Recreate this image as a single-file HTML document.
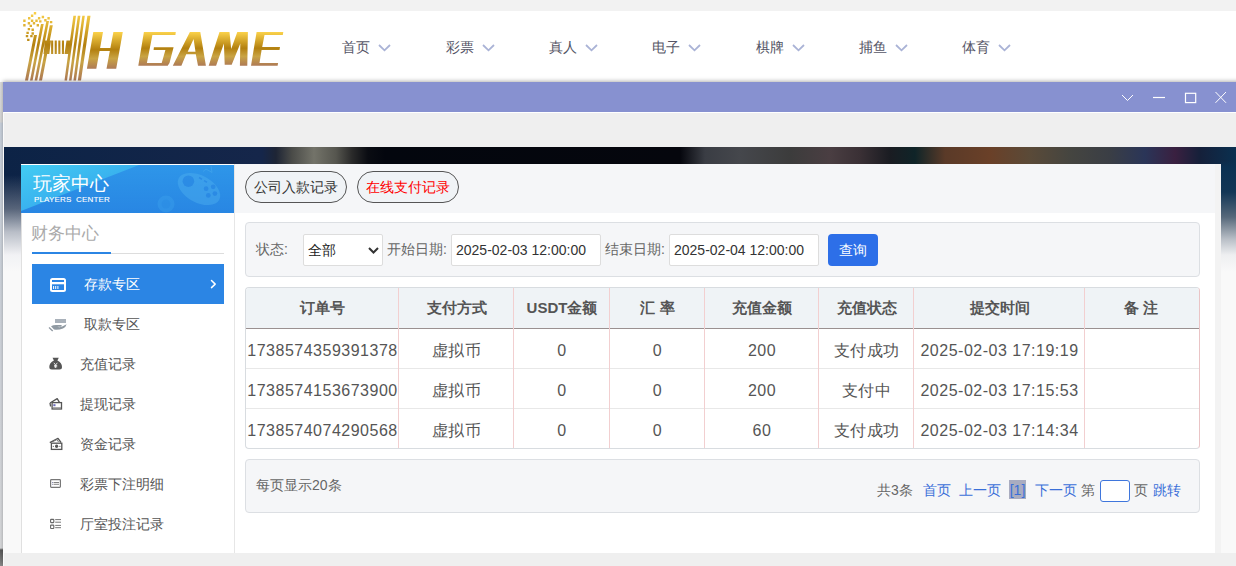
<!DOCTYPE html>
<html><head><meta charset="utf-8">
<style>
*{box-sizing:border-box;margin:0;padding:0}
html,body{width:1236px;height:566px;overflow:hidden;background:#f2f2f2;font-family:"Liberation Sans",sans-serif;}
.abs{position:absolute}
#hdr{position:absolute;left:0;top:11px;width:1236px;height:71px;background:#fff}
.nav{position:absolute;top:27px;font-size:14px;color:#555566;line-height:18px;white-space:nowrap}
.nav svg{position:absolute;left:36px;top:6px}
#under{position:absolute;left:0;top:82px;width:3px;height:484px;background:linear-gradient(to bottom,#dcdcdc 0,#d8d8d8 40px,#c9d1dc 41px,#d3d7dd 300px,#d9dadc 466px,#5a5a5a 468px,#8a8a8a 484px)}
#modal{position:absolute;left:3px;top:82px;width:1240px;height:484px;background:#efefef;box-shadow:0 -1px 4px rgba(0,0,0,.3)}
#title{position:absolute;left:0;top:0;width:100%;height:30px;background:#8791d0}
#frame{position:absolute;left:1px;top:65px;width:1239px;height:406px;overflow:hidden;background:linear-gradient(to bottom,rgba(255,255,255,0) 0px,rgba(255,255,255,0) 28px,rgba(150,155,165,.55) 62px,rgba(215,217,222,.85) 85px,rgba(246,246,248,.98) 108px,#f9f9f9 125px),linear-gradient(to right,#0c2346 -4px,#15264a 258px,#1e2535 272px,#4a4b48 288px,#737369 310px,#56564f 332px,#2a2a2a 348px,#0a0c12 364px,#03060e 381px,#05060d 676px,#3a3d44 701px,#45474c 736px,#3c3c3c 786px,#4a3e42 826px,#3a3035 856px,#1a1c22 886px,#0f2428 911px,#5a3a28 941px,#6a4028 986px,#5a4a38 1026px,#454540 1066px,#3a3e45 1106px,#2a3558 1141px,#3a2040 1171px,#15203a 1196px,#0a3050 1232px)}
#panel{position:absolute;left:17px;top:17px;width:1200px;height:389px;background:#f3f3f3}
#side{position:absolute;left:0;top:0;width:214px;height:389px;background:#fff;border-right:1px solid #e6e6e6}
#shead{position:absolute;left:0;top:1px;width:213px;height:48px;background:linear-gradient(110deg,#3fc2ef 0%,#2f9de9 35%,#2b8ee6 60%,#2784e2 100%)}
.item{position:absolute;left:11px;width:192px;height:40px;font-size:14px;color:#555;line-height:40px}
.item.act{background:#2b85e4;color:#fff}
.item svg{position:absolute;overflow:visible}
#main{position:absolute;left:214px;top:0;width:980px;height:389px;background:#fff}
#tabs{position:absolute;left:0;top:0;width:980px;height:49px;background:#f5f6f8}
.pill{position:absolute;top:7px;height:32px;border:1px solid #555;border-radius:16px;background:#f0f3f6;font-size:14px;line-height:30px;text-align:center;color:#333}
.box{position:absolute;border:1px solid #dcdfe3;border-radius:4px;background:#f5f6f8}
.lbl{position:absolute;font-size:14px;color:#666;line-height:18px;white-space:nowrap}
.inp{position:absolute;top:11px;height:32px;background:#fff;border:1px solid #ddd;border-radius:2px;font-size:14px;color:#333;line-height:30px;padding-left:4px;white-space:nowrap}
.th{position:absolute;top:0;height:40px;line-height:40px;text-align:center;font-size:15px;font-weight:bold;color:#555}
.td{position:absolute;height:40px;line-height:44px;text-align:center;font-size:16px;color:#555;white-space:nowrap;letter-spacing:0.5px}
</style></head><body>
<div id="hdr">

  <div class="nav" style="left:342.4px">首页<svg width="13" height="8"><path d="M1 1L6.5 6.3L12 1" fill="none" stroke="#aab3d6" stroke-width="1.8"/></svg></div>
  <div class="nav" style="left:445.7px">彩票<svg width="13" height="8"><path d="M1 1L6.5 6.3L12 1" fill="none" stroke="#aab3d6" stroke-width="1.8"/></svg></div>
  <div class="nav" style="left:549.0px">真人<svg width="13" height="8"><path d="M1 1L6.5 6.3L12 1" fill="none" stroke="#aab3d6" stroke-width="1.8"/></svg></div>
  <div class="nav" style="left:652.3px">电子<svg width="13" height="8"><path d="M1 1L6.5 6.3L12 1" fill="none" stroke="#aab3d6" stroke-width="1.8"/></svg></div>
  <div class="nav" style="left:755.6px">棋牌<svg width="13" height="8"><path d="M1 1L6.5 6.3L12 1" fill="none" stroke="#aab3d6" stroke-width="1.8"/></svg></div>
  <div class="nav" style="left:858.9px">捕鱼<svg width="13" height="8"><path d="M1 1L6.5 6.3L12 1" fill="none" stroke="#aab3d6" stroke-width="1.8"/></svg></div>
  <div class="nav" style="left:962.2px">体育<svg width="13" height="8"><path d="M1 1L6.5 6.3L12 1" fill="none" stroke="#aab3d6" stroke-width="1.8"/></svg></div>
</div>
<div id="under"></div>
<svg class="abs" style="left:0;top:0" width="300" height="84" viewBox="0 0 300 84">
  <defs>
    <linearGradient id="gold" x1="0" y1="0" x2="0" y2="1">
      <stop offset="0" stop-color="#fbd24a"/>
      <stop offset="0.48" stop-color="#b3800f"/>
      <stop offset="0.72" stop-color="#c9a443"/>
      <stop offset="1" stop-color="#ae7a56"/>
    </linearGradient>
  </defs>
  <path fill="url(#gold)" d="M86.9 68.7 L93.3 32.1 L103.0 32.1 L96.3 68.7Z M106.5 68.7 L113.4 32.1 L122.8 32.1 L116.2 68.7Z M99.5 48.1 L117.5 48.1 L117.1 51.1 L99.1 51.1Z"/>
  <path fill="url(#gold)" d="M143.9 32.0 L175.8 32.0 L175.4 35.0 L152.4 35.0 L146.9 62.9 L161.7 62.9 L165.4 49.9 L153.6 49.9 L153.9 47.3 L173.6 47.3 L169.5 63.0 L167.7 65.8 L138.3 65.8Z M189.9 32.0 L200.3 32.0 L205.9 65.8 L198.0 65.8 L195.8 54.3 L186.2 54.3 L181.4 65.8 L172.8 65.8ZM193.6 39.1 L187.7 51.7 L195.5 51.7Z M208.7 65.8 L219.5 32.0 L229.5 32.0 L231.2 49.0 L237.3 32.0 L247.9 32.0 L247.3 65.8 L239.9 65.8 L240.3 43.6 L231.7 64.7 L224.7 64.7 L223.9 43.6 L216.1 65.8Z M256.6 32.0 L283.3 32.0 L282.8 35.1 L264.5 35.1 L262.2 46.9 L280.0 46.9 L279.5 49.9 L261.6 49.9 L259.5 62.9 L278.1 62.9 L277.6 65.8 L251.0 65.8Z"/>
  <path fill="url(#gold)" d="M25.0 80.5 L34.0 35.0 L37.0 35.0 L28.0 80.5Z M30.0 80.5 L41.0 24.0 L43.7 24.0 L32.6 80.5Z M34.6 80.5 L46.4 21.0 L49.0 21.0 L37.2 80.5Z M39.0 80.5 L49.8 25.3 L52.8 25.3 L42.0 80.5Z M64.5 80.5 L73.4 15.7 L76.0 15.7 L67.0 80.5Z M69.0 80.5 L77.8 15.7 L80.4 15.7 L71.5 80.5Z M73.4 80.5 L82.3 15.7 L84.8 15.7 L76.0 80.5Z M77.8 80.5 L87.4 15.7 L90.5 15.7 L81.0 80.5Z M45.0 40.5 L51.0 40.5 L49.3 54.0 L43.5 54.0Z M51.1 40.5 L53.2 40.5 L53.2 54.0 L51.1 54.0Z M54.7 40.5 L56.8 40.5 L56.8 54.0 L54.7 54.0Z M58.3 40.5 L60.4 40.5 L60.4 54.0 L58.3 54.0Z M61.9 40.5 L64.0 40.5 L64.0 54.0 L61.9 54.0Z M66.5 40.5 L71.5 40.5 L69.5 54.0 L64.5 54.0Z M33.8 12.0 L36.2 12.0 L36.2 14.4 L33.8 14.4Z M30.9 14.5 L33.3 14.5 L33.3 16.9 L30.9 16.9Z M28.0 17.1 L30.4 17.1 L30.4 19.5 L28.0 19.5Z M37.9 17.1 L40.3 17.1 L40.3 19.5 L37.9 19.5Z M41.7 15.8 L44.1 15.8 L44.1 18.2 L41.7 18.2Z M47.4 17.1 L49.8 17.1 L49.8 19.5 L47.4 19.5Z M23.2 19.6 L25.6 19.6 L25.6 22.0 L23.2 22.0Z M30.9 19.6 L33.3 19.6 L33.3 22.0 L30.9 22.0Z M35.3 19.6 L37.7 19.6 L37.7 22.0 L35.3 22.0Z M39.1 20.2 L41.5 20.2 L41.5 22.6 L39.1 22.6Z M49.9 20.9 L52.3 20.9 L52.3 23.3 L49.9 23.3Z M27.7 22.1 L30.1 22.1 L30.1 24.5 L27.7 24.5Z M32.8 22.1 L35.2 22.1 L35.2 24.5 L32.8 24.5Z M44.2 19.0 L46.6 19.0 L46.6 21.4 L44.2 21.4Z M23.2 24.1 L25.6 24.1 L25.6 26.5 L23.2 26.5Z M29.6 24.7 L32.0 24.7 L32.0 27.1 L29.6 27.1Z M36.6 24.1 L39.0 24.1 L39.0 26.5 L36.6 26.5Z M27.7 27.9 L30.1 27.9 L30.1 30.3 L27.7 30.3Z M31.5 28.5 L33.9 28.5 L33.9 30.9 L31.5 30.9Z M26.4 31.7 L28.8 31.7 L28.8 34.1 L26.4 34.1Z M31.5 32.3 L33.9 32.3 L33.9 34.7 L31.5 34.7Z M25.8 34.9 L28.2 34.9 L28.2 37.3 L25.8 37.3Z M30.2 34.9 L32.6 34.9 L32.6 37.3 L30.2 37.3Z M27.1 38.7 L29.5 38.7 L29.5 41.1 L27.1 41.1Z"/>
</svg>
<div id="modal">
  <div id="title">
    <svg class="abs" style="left:1115px;top:9px" width="115" height="14" viewBox="0 0 115 14">
      <path d="M4 4L9.5 9.5L15 4" fill="none" stroke="#fff" stroke-width="1"/>
      <path d="M35 6.5H47" stroke="#fff" stroke-width="1.2"/>
      <rect x="67.5" y="2.3" width="10.2" height="9.3" fill="none" stroke="#fff" stroke-width="1.2"/>
      <path d="M97.5 1L108 11.8M108 1L97.5 11.8" stroke="#fff" stroke-width="1"/>
    </svg>
  </div>
  <div class="abs" style="left:0;top:30px;width:1240px;height:1px;background:#fff"></div>
  <div class="abs" style="left:0;top:30px;width:1px;height:454px;background:#fafafa"></div>
  <div id="frame">
    <div class="abs" style="left:1217px;top:0;width:22px;height:125px;background:linear-gradient(to bottom,rgba(10,48,80,0) 0,rgba(10,48,80,0) 14px,#0b3152 20px,#123656 45px,#56687a 70px,#b8bec6 92px,#eeeff1 108px,#f9f9f9 125px)"></div>
    <div id="panel">
      <div id="side">
        <div class="abs" style="left:0;top:49px;width:1px;height:340px;background:#e0e0e0"></div>
        <div id="shead">
          <svg class="abs" style="left:0;top:0" width="213" height="48" viewBox="0 0 213 48">
            <defs>
              <linearGradient id="hb" x1="0" y1="0" x2="0" y2="1"><stop offset="0" stop-color="#2e96e9"/><stop offset="1" stop-color="#2886e3"/></linearGradient>
              <linearGradient id="hl" x1="0" y1="0" x2="1" y2="1"><stop offset="0" stop-color="#42ccf3"/><stop offset="1" stop-color="#3199ea"/></linearGradient>
            </defs>
            <rect width="213" height="48" fill="url(#hb)"/>
            <path d="M0 0H118L0 46Z" fill="url(#hl)"/>
            <g opacity="0.45">
              <ellipse cx="178" cy="24" rx="23" ry="13.5" transform="rotate(28 178 24)" fill="#4eb0f0"/>
              <circle cx="167.4" cy="16.2" r="5.8" fill="#2b88e4"/>
              <circle cx="185.1" cy="23.7" r="2.4" fill="#2b88e4"/>
              <circle cx="192.2" cy="21.8" r="2.4" fill="#2b88e4"/>
              <circle cx="187.3" cy="30.4" r="2.4" fill="#2b88e4"/>
              <circle cx="193.9" cy="28.6" r="2.4" fill="#2b88e4"/>
              <path d="M178 12.5L181 14.2M183 15.6L186 17.3" stroke="#2b88e4" stroke-width="1.6"/>
              <path d="M182 6.5L185 4L191 7.5L190 1" stroke="#4eb0f0" stroke-width="1" fill="none"/>
              <circle cx="145" cy="39" r="8.5" fill="#3aa0ec"/>
              <circle cx="145" cy="39" r="4.5" fill="#3196e8"/>
            </g>
          </svg>
          <div class="abs" style="left:12px;top:8px;font-size:19px;color:#fff;line-height:22px">玩家中心</div>
          <div class="abs" style="left:13px;top:30px;font-size:8px;color:#fff;line-height:9px;letter-spacing:0.15px;-webkit-text-stroke:0.1px #fff">PLAYERS&nbsp; CENTER</div>
        </div>
        <div class="abs" style="left:10px;top:60px;font-size:17px;color:#aaa;line-height:20px">财务中心</div>
        <div class="abs" style="left:11px;top:89px;width:192px;height:1px;background:#ddd"></div>
        <div class="abs" style="left:11px;top:88px;width:79px;height:2px;background:#2b85e4"></div>
        <div class="item act" style="top:100px"><svg width="40" height="40" style="left:0;top:0" viewBox="0 0 40 40"><rect x="18" y="14" width="16" height="14" rx="2.5" fill="#fff"/><rect x="20" y="16" width="12" height="2" fill="#2b85e4"/><rect x="20" y="20.3" width="12" height="5.7" fill="#2b85e4"/><rect x="21.1" y="22" width="1" height="3" fill="#fff"/><rect x="23.2" y="22" width="1" height="3" fill="#fff"/><rect x="25.4" y="22" width="1" height="3" fill="#fff"/><path d="M179.5 16.5L183.2 20.1L179.5 23.6" fill="none" stroke="#fff" stroke-width="1.5" stroke-linecap="round" stroke-linejoin="round" transform="translate(0,0)"/></svg><span style="position:absolute;left:52px">存款专区</span></div>
        <div class="item" style="top:140px"><svg width="40" height="40" style="left:0;top:0" viewBox="0 0 40 40"><rect x="23" y="15" width="11" height="4" fill="#a9b1ba"/><path d="M19 22.3Q21 20.9 24 20.9L29.3 20.9Q30.6 21.6 29 22.7L25.2 22.7Q27.2 23.6 30.2 22.6L34.6 20.3Q34.2 22.8 31 24.4Q27 26 22 25.6Z" fill="#8f99a2"/><path d="M17.4 23L21.2 26.6L20.2 27.5L16.6 24Z" fill="#8f99a2"/></svg><span style="position:absolute;left:52px">取款专区</span></div>
        <div class="item" style="top:180px"><svg width="40" height="40" style="left:0;top:0" viewBox="0 0 40 40"><path d="M20.5 13.8L26.8 13.8L25.4 16.4Q30 18.5 30 23Q30 25.5 27.5 25.5L19.8 25.5Q17.3 25.5 17.3 23Q17.3 18.5 21.9 16.4Z" fill="#555"/><path d="M21.9 18.8L23.6 21L25.3 18.8M23.6 21V24M22 21.6H25.2M22 22.8H25.2" stroke="#fff" stroke-width="0.8" fill="none"/></svg><span style="position:absolute;left:48px">充值记录</span></div>
        <div class="item" style="top:220px"><svg width="40" height="40" style="left:0;top:0" viewBox="0 0 40 40"><path d="M18 19L25.2 14.6L27.6 18.6" stroke="#555" stroke-width="1.3" fill="none" stroke-linejoin="round"/><path d="M18 19L18.6 22.5" stroke="#555" stroke-width="1.3"/><rect x="20.1" y="18.6" width="9.4" height="6.4" stroke="#555" stroke-width="1.3" fill="none"/><rect x="21.3" y="20.2" width="2.2" height="2" fill="#6d6dbb"/><rect x="21" y="23.3" width="8" height="1.3" fill="#888"/></svg><span style="position:absolute;left:48px">提现记录</span></div>
        <div class="item" style="top:260px"><svg width="40" height="40" style="left:0;top:0" viewBox="0 0 40 40"><path d="M17.8 18.6L26 14.3L29 18.5" stroke="#555" stroke-width="1.3" fill="none" stroke-linejoin="round"/><path d="M21 17.5L25 15.5L26.5 18" stroke="#777" stroke-width="1" fill="none"/><rect x="19.4" y="19.2" width="10.4" height="6.2" stroke="#555" stroke-width="1.3" fill="none"/><ellipse cx="24.6" cy="22.3" rx="1.6" ry="1.8" fill="#555"/><circle cx="21.3" cy="22.3" r="0.6" fill="#555"/><circle cx="27.9" cy="22.3" r="0.6" fill="#555"/></svg><span style="position:absolute;left:48px">资金记录</span></div>
        <div class="item" style="top:300px"><svg width="40" height="40" style="left:0;top:0" viewBox="0 0 40 40"><rect x="18.6" y="15.6" width="9.8" height="7.7" rx="0.8" stroke="#777" stroke-width="1.2" fill="none"/><path d="M21.5 18.5H27M21.5 20.3H27" stroke="#777" stroke-width="0.9"/><path d="M20 18.5H20.8M20 20.3H20.8" stroke="#669" stroke-width="0.9"/></svg><span style="position:absolute;left:48px">彩票下注明细</span></div>
        <div class="item" style="top:340px"><svg width="40" height="40" style="left:0;top:0" viewBox="0 0 40 40"><rect x="18.6" y="15.4" width="3.2" height="3.2" rx="0.5" stroke="#666" stroke-width="1.1" fill="none"/><rect x="18.6" y="21.1" width="3.2" height="3.4" rx="0.5" stroke="#666" stroke-width="1.1" fill="none"/><path d="M23.2 15.6H29M23.2 18.2H29M23.2 21.4H29M23.2 23.7H29" stroke="#777" stroke-width="1"/></svg><span style="position:absolute;left:48px">厅室投注记录</span></div>
      </div>
      <div id="main">
        <div id="tabs">
          <div class="pill" style="left:10px;width:102px">公司入款记录</div>
          <div class="pill" style="left:122px;width:102px;color:#f00">在线支付记录</div>
        </div>
        <div class="box" style="left:10px;top:58px;width:955px;height:55px">
          <div class="lbl" style="left:10px;top:17px">状态:</div>
          <div class="inp" style="left:57px;width:80px;color:#222">全部<svg class="abs" style="left:64px;top:12px" width="11" height="7"><path d="M1 1L5.5 5.5L10 1" fill="none" stroke="#333" stroke-width="2"/></svg></div>
          <div class="lbl" style="left:141px;top:17px">开始日期:</div>
          <div class="inp" style="left:205px;width:150px">2025-02-03 12:00:00</div>
          <div class="lbl" style="left:359px;top:17px">结束日期:</div>
          <div class="inp" style="left:423px;width:150px">2025-02-04 12:00:00</div>
          <div class="abs" style="left:582px;top:11px;width:50px;height:32px;background:#2d6fe8;border-radius:4px;color:#fff;font-size:14px;line-height:32px;text-align:center">查询</div>
        </div>
        <div id="tbl" class="abs" style="left:10px;top:123px;width:955px;height:162px;border:1px solid #d8dce0;border-right-color:#eac4c6;border-radius:4px;overflow:hidden">
          <div class="abs" style="left:0;top:0;width:953px;height:41px;background:#eff3f6;border-bottom:1px solid #9a9090"></div>
          <div class="abs" style="left:0;top:80px;width:953px;height:1px;background:#e8e8e8"></div>
          <div class="abs" style="left:0;top:120px;width:953px;height:1px;background:#e8e8e8"></div>
          <div class="abs" style="left:152px;top:0;width:1px;height:162px;background:#f2cfd0"></div>
          <div class="abs" style="left:267px;top:0;width:1px;height:162px;background:#f2cfd0"></div>
          <div class="abs" style="left:363px;top:0;width:1px;height:162px;background:#f2cfd0"></div>
          <div class="abs" style="left:458px;top:0;width:1px;height:162px;background:#f2cfd0"></div>
          <div class="abs" style="left:572px;top:0;width:1px;height:162px;background:#f2cfd0"></div>
          <div class="abs" style="left:667px;top:0;width:1px;height:162px;background:#f2cfd0"></div>
          <div class="abs" style="left:838px;top:0;width:1px;height:162px;background:#f2cfd0"></div>
          <div class="th" style="left:0px;width:153px">订单号</div>
          <div class="th" style="left:153px;width:115px">支付方式</div>
          <div class="th" style="left:268px;width:96px">USDT金额</div>
          <div class="th" style="left:364px;width:95px">汇 率</div>
          <div class="th" style="left:459px;width:114px">充值金额</div>
          <div class="th" style="left:573px;width:95px">充值状态</div>
          <div class="th" style="left:668px;width:171px">提交时间</div>
          <div class="th" style="left:838px;width:114px">备 注</div>
          <div class="td" style="left:0px;top:41px;width:153px">1738574359391378</div>
          <div class="td" style="left:153px;top:41px;width:115px">虚拟币</div>
          <div class="td" style="left:268px;top:41px;width:96px">0</div>
          <div class="td" style="left:364px;top:41px;width:95px">0</div>
          <div class="td" style="left:459px;top:41px;width:114px">200</div>
          <div class="td" style="left:573px;top:41px;width:95px">支付成功</div>
          <div class="td" style="left:668px;top:41px;width:171px">2025-02-03 17:19:19</div>
          <div class="td" style="left:838px;top:41px;width:114px"></div>
          <div class="td" style="left:0px;top:81px;width:153px">1738574153673900</div>
          <div class="td" style="left:153px;top:81px;width:115px">虚拟币</div>
          <div class="td" style="left:268px;top:81px;width:96px">0</div>
          <div class="td" style="left:364px;top:81px;width:95px">0</div>
          <div class="td" style="left:459px;top:81px;width:114px">200</div>
          <div class="td" style="left:573px;top:81px;width:95px">支付中</div>
          <div class="td" style="left:668px;top:81px;width:171px">2025-02-03 17:15:53</div>
          <div class="td" style="left:838px;top:81px;width:114px"></div>
          <div class="td" style="left:0px;top:121px;width:153px">1738574074290568</div>
          <div class="td" style="left:153px;top:121px;width:115px">虚拟币</div>
          <div class="td" style="left:268px;top:121px;width:96px">0</div>
          <div class="td" style="left:364px;top:121px;width:95px">0</div>
          <div class="td" style="left:459px;top:121px;width:114px">60</div>
          <div class="td" style="left:573px;top:121px;width:95px">支付成功</div>
          <div class="td" style="left:668px;top:121px;width:171px">2025-02-03 17:14:34</div>
          <div class="td" style="left:838px;top:121px;width:114px"></div>
        </div>
        <div class="box" style="left:10px;top:295px;width:955px;height:54px">
          <div class="lbl" style="left:10px;top:16px">每页显示20条</div>
          <div class="lbl" style="left:631px;top:21px">共3条</div>
          <div class="lbl" style="left:677px;top:21px;color:#3a6fd8">首页</div>
          <div class="lbl" style="left:713px;top:21px;color:#3a6fd8">上一页</div>
          <div class="abs" style="left:763px;top:20px;width:17px;height:19px;background:#a9acc0"></div>
          <div class="lbl" style="left:763px;top:21px;color:#3a6fd8;width:17px;text-align:center">[1]</div>
          <div class="lbl" style="left:789px;top:21px;color:#3a6fd8">下一页</div>
          <div class="lbl" style="left:835px;top:21px">第</div>
          <div class="abs" style="left:854px;top:20px;width:30px;height:22px;background:#fff;border:1.5px solid #3f76dc;border-radius:3px"></div>
          <div class="lbl" style="left:888px;top:21px">页</div>
          <div class="lbl" style="left:907px;top:21px;color:#3a6fd8">跳转</div>
        </div>
      </div>
    </div>
  </div>
</div>
</body></html>
